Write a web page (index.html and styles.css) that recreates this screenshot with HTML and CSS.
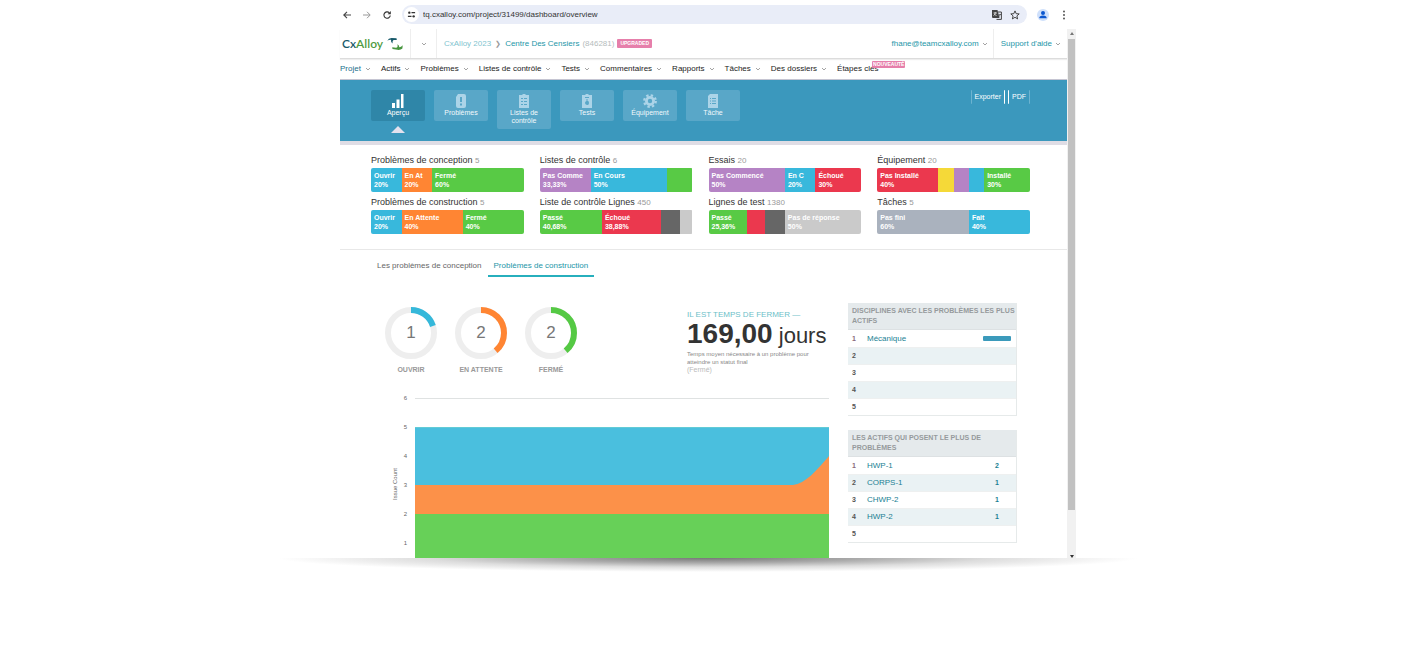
FILE: index.html
```html
<!DOCTYPE html>
<html lang="fr">
<head>
<meta charset="utf-8">
<meta name="viewport" content="width=device-width, initial-scale=1">
<title>CxAlloy – Aperçu</title>
<link rel="stylesheet" href="styles.css">
</head>
<body>
<svg class="sprite" aria-hidden="true">
  <symbol id="chev" viewBox="0 0 6 6"><path d="M1 2l2 2 2-2" fill="none" stroke="currentColor" stroke-width=".9"/></symbol>
</svg>
<div class="window">
  <div class="browser">
    <button class="tool" aria-label="Retour"><svg viewBox="0 0 10 10"><path d="M9 5H2M5 1.800L1.800 5 5 8.200" fill="none" stroke="#444" stroke-width="1.100"/></svg></button>
    <button class="tool" aria-label="Suivant"><svg viewBox="0 0 10 10"><path d="M1 5h7M5 1.800L8.200 5 5 8.200" fill="none" stroke="#999" stroke-width="1"/></svg></button>
    <button class="tool" aria-label="Actualiser"><svg viewBox="0 0 10 10"><path d="M8.300 5.500A3.200 3.200 0 1 1 7.300 2.700" fill="none" stroke="#333" stroke-width="1.100"/><path d="M8.800 1v3.200H5.600z" fill="#333"/></svg></button>
    <div class="address">
      <span class="site"><svg viewBox="0 0 10 10"><path d="M5 3h4M1 7h4" stroke="#333" stroke-width="1.300"/><circle cx="2.600" cy="3" r="1.300" fill="#333"/><circle cx="7.400" cy="7" r="1.300" fill="#333"/></svg></span>
      <input class="url" type="text" aria-label="Adresse" value="tq.cxalloy.com/project/31499/dashboard/overview">
      <button class="tool" aria-label="Traduire"><svg viewBox="0 0 10 10"><path d="M0 0h5.500l2 8H1Q0 8 0 7z" fill="#444"/><path d="M6 2h3.400v7.400H4.500" fill="none" stroke="#444" stroke-width="1"/><path d="M1.500 3h3.500M3.200 2v1Q3 5 1.500 5.500M2.500 4l2 2" stroke="#fff" stroke-width=".7" fill="none"/><path d="M6.500 4.500H9M8.500 4.500L6.500 7" stroke="#444" stroke-width=".7"/></svg></button>
      <button class="tool" aria-label="Favori"><svg viewBox="0 0 10 10"><path d="M5 .9l1.200 2.800 3 .2-2.300 2 .7 3L5 7.300 2.400 8.900l.7-3-2.300-2 3-.2z" fill="none" stroke="#333" stroke-width=".9"/></svg></button>
    </div>
    <button class="tool profile" aria-label="Profil"><svg viewBox="0 0 12 12"><circle cx="6" cy="6" r="6" fill="#cfe0fb"/><circle cx="6" cy="4" r="2" fill="#0b57d0"/><path d="M2.300 9.300Q2.300 6.600 6 6.600t3.700 2.700z" fill="#0b57d0"/></svg></button>
    <button class="tool" aria-label="Menu"><svg viewBox="0 0 10 10"><g fill="#444"><circle cx="5" cy="1.500" r=".9"/><circle cx="5" cy="5" r=".9"/><circle cx="5" cy="8.500" r=".9"/></g></svg></button>
  </div>

  <div class="view">
    <div class="page">
      <header class="top">
        <a class="logo" href="#"><span><span class="cx">Cx</span>Alloy</span>
          <svg viewBox="0 0 16 14"><path d="M.3 3.800Q1.500 1 4.500 1L9.500 1.200L9.800 3H7Q5.200 3.200 5.600 6.500Q3.600 5 4 2.800Q2 2.600 .3 3.800z" fill="#17596a"/><path d="M15.700 8.200L15.400 11.500Q13.500 13.200 10.500 12.800L5.500 12L5.200 10.300L9 10.800Q11.200 10.800 10.400 7.300Q12.400 8.500 12.300 10.300Q14 10.200 15.700 8.200z" fill="#48963f"/></svg></a>
        <button class="switch" aria-label="Changer de projet"><svg class="chev"><use href="#chev"/></svg></button>
        <nav class="crumbs" aria-label="Fil d'Ariane">
          <a class="parent" href="#">CxAlloy 2023</a><span class="sep">❯</span><a href="#">Centre Des Censiers</a>
          <span class="id">(846281)</span><span class="badge">UPGRADED</span>
        </nav>
        <button class="user">fhane@teamcxalloy.com<svg class="chev"><use href="#chev"/></svg></button>
        <button class="help">Support d'aide<svg class="chev"><use href="#chev"/></svg></button>
      </header>

      <nav class="menu" aria-label="Menu principal">
        <button class="current">Projet<svg class="chev"><use href="#chev"/></svg></button>
        <button>Actifs<svg class="chev"><use href="#chev"/></svg></button>
        <button>Problèmes<svg class="chev"><use href="#chev"/></svg></button>
        <button>Listes de contrôle<svg class="chev"><use href="#chev"/></svg></button>
        <button>Tests<svg class="chev"><use href="#chev"/></svg></button>
        <button>Commentaires<svg class="chev"><use href="#chev"/></svg></button>
        <button>Rapports<svg class="chev"><use href="#chev"/></svg></button>
        <button>Tâches<svg class="chev"><use href="#chev"/></svg></button>
        <button>Des dossiers<svg class="chev"><use href="#chev"/></svg></button>
        <a class="milestones" href="#">Étapes clés<span class="badge new">NOUVEAUTÉ</span></a>
      </nav>

      <section class="hero">
        <div class="tiles">
          <a class="tile active" href="#"><svg viewBox="0 0 14 14"><path d="M1 9h3v5H1zM5.500 5.500h3V14h-3zM10 0h2.500v14H10z"/></svg>Aperçu</a>
          <a class="tile" href="#"><svg viewBox="0 0 14 14"><path fill-rule="evenodd" d="M4 0h6q2 0 2 2v10q0 2-2 2H4q-2 0-2-2V3zM6 3v5h2V3zM6 9.500v2h2v-2z"/></svg>Problèmes</a>
          <a class="tile" href="#"><svg viewBox="0 0 14 14"><path fill-rule="evenodd" d="M2 1h3l1-1h2l1 1h3v13H2zM4 4v1h2V4zM7 4v1h3V4zM4 7v1h2V7zM7 7v1h3V7zM4 10v1h2v-1zM7 10v1h3v-1z"/></svg>Listes de contrôle</a>
          <a class="tile" href="#"><svg viewBox="0 0 14 14"><path fill-rule="evenodd" d="M2 1h3l1-1h2l1 1h3v13H2zM5 3v1h4V3zM6.500 5v2Q5 7.500 5 9t2 2 2-2-1.500-2V5z"/></svg>Tests</a>
          <a class="tile" href="#"><svg viewBox="0 0 14 14"><circle cx="7" cy="7" r="3.600" fill="none" stroke="currentColor" stroke-width="2.800"/><circle cx="7" cy="7" r="5.800" fill="none" stroke="currentColor" stroke-width="2.200" stroke-dasharray="2.400 2.155"/></svg>Équipement</a>
          <a class="tile" href="#"><svg viewBox="0 0 14 14"><path fill-rule="evenodd" d="M4 0h8v14H2V2zM4 4v1h1V4zM6 4v1h4V4zM4 6.500v1h1v-1zM6 6.500v1h4v-1zM4 9v1h1V9zM6 9v1h4V9z"/></svg>Tâche</a>
        </div>
        <div class="actions"><button>Exporter</button><button>PDF</button></div>
      </section>

      <section class="stats">
        <article><h2>Problèmes de conception <small>5</small></h2><div class="bar"><span class="blue" style="width:20%">Ouvrir<br>20%</span><span class="orange" style="width:20%">En At<br>20%</span><span class="green" style="width:60%">Fermé<br>60%</span></div></article>
        <article><h2>Listes de contrôle <small>6</small></h2><div class="bar"><span class="purple" style="width:33.33%">Pas Comme<br>33,33%</span><span class="blue" style="width:50%">En Cours<br>50%</span><span class="green" style="width:16.67%"></span></div></article>
        <article><h2>Essais <small>20</small></h2><div class="bar"><span class="purple" style="width:50%">Pas Commencé<br>50%</span><span class="blue" style="width:20%">En C<br>20%</span><span class="red" style="width:30%">Échoué<br>30%</span></div></article>
        <article><h2>Équipement <small>20</small></h2><div class="bar"><span class="red" style="width:40%">Pas Installé<br>40%</span><span class="yellow" style="width:10%"></span><span class="purple" style="width:10%"></span><span class="blue" style="width:10%"></span><span class="green" style="width:30%">Installé<br>30%</span></div></article>
        <article><h2>Problèmes de construction <small>5</small></h2><div class="bar"><span class="blue" style="width:20%">Ouvrir<br>20%</span><span class="orange" style="width:40%">En Attente<br>40%</span><span class="green" style="width:40%">Fermé<br>40%</span></div></article>
        <article><h2>Liste de contrôle Lignes <small>450</small></h2><div class="bar"><span class="green" style="width:40.68%">Passé<br>40,68%</span><span class="red" style="width:38.88%">Échoué<br>38,88%</span><span class="dark" style="width:12.44%"></span><span class="silver" style="width:8%"></span></div></article>
        <article><h2>Lignes de test <small>1380</small></h2><div class="bar"><span class="green" style="width:25.36%">Passé<br>25,36%</span><span class="red" style="width:11.64%"></span><span class="dark" style="width:13%"></span><span class="silver" style="width:50%">Pas de réponse<br>50%</span></div></article>
        <article><h2>Tâches <small>5</small></h2><div class="bar"><span class="slate" style="width:60%">Pas fini<br>60%</span><span class="blue" style="width:40%">Fait<br>40%</span></div></article>
      </section>

      <nav class="tabs" aria-label="Type de problèmes">
        <a href="#">Les problèmes de conception</a><a class="on" href="#">Problèmes de construction</a>
      </nav>

      <main class="main">
        <div class="left">
          <div class="summary">
            <div class="donuts">
              <figure><div class="ring"><svg viewBox="0 0 52 52"><circle class="track" cx="26" cy="26" r="23"/><circle cx="26" cy="26" r="23" pathLength="100" stroke="#35b8da" stroke-dasharray="20 100"/></svg><span>1</span></div><figcaption>OUVRIR</figcaption></figure>
              <figure><div class="ring"><svg viewBox="0 0 52 52"><circle class="track" cx="26" cy="26" r="23"/><circle cx="26" cy="26" r="23" pathLength="100" stroke="#ff8533" stroke-dasharray="39 100"/></svg><span>2</span></div><figcaption>EN ATTENTE</figcaption></figure>
              <figure><div class="ring"><svg viewBox="0 0 52 52"><circle class="track" cx="26" cy="26" r="23"/><circle cx="26" cy="26" r="23" pathLength="100" stroke="#55c944" stroke-dasharray="39 100"/></svg><span>2</span></div><figcaption>FERMÉ</figcaption></figure>
            </div>
            <div class="metric">
              <h3>IL EST TEMPS DE FERMER —</h3>
              <p class="value"><strong>169,00</strong> jours</p>
              <p class="note">Temps moyen nécessaire à un problème pour<br>atteindre un statut final</p>
              <p class="state">(Fermé)</p>
            </div>
          </div>
          <div class="chart">
            <div class="axis-title"><span>Issue Count</span></div>
            <ol class="ticks"><li>6</li><li>5</li><li>4</li><li>3</li><li>2</li><li>1</li></ol>
            <svg class="plot" viewBox="0 0 414 160" preserveAspectRatio="none" role="img" aria-label="Nombre de problèmes">
              <path d="M0 .5h414" stroke="#dfe2e2" stroke-width="1"/>
              <path d="M0 29h414v131H0z" fill="#4abfde"/>
              <path d="M0 29.500h414" stroke="#62cbd6"/>
              <path d="M0 87h378C390 86 402 72 414 58V160H0z" fill="#fc9149"/>
              <path d="M0 116h414v44H0z" fill="#67d058"/>
            </svg>
          </div>
        </div>
        <aside class="side">
          <table>
            <thead><tr><th colspan="3">DISCIPLINES AVEC LES PROBLÈMES LES PLUS ACTIFS</th></tr></thead>
            <tbody>
              <tr><td>1</td><td><a href="#">Mécanique</a></td><td><span class="meter"></span></td></tr>
              <tr><td>2</td><td></td><td></td></tr>
              <tr><td>3</td><td></td><td></td></tr>
              <tr><td>4</td><td></td><td></td></tr>
              <tr><td>5</td><td></td><td></td></tr>
            </tbody>
          </table>
          <table>
            <thead><tr><th colspan="3">LES ACTIFS QUI POSENT LE PLUS DE PROBLÈMES</th></tr></thead>
            <tbody>
              <tr><td>1</td><td><a href="#">HWP-1</a></td><td class="num">2</td></tr>
              <tr><td>2</td><td><a href="#">CORPS-1</a></td><td class="num">1</td></tr>
              <tr><td>3</td><td><a href="#">CHWP-2</a></td><td class="num">1</td></tr>
              <tr><td>4</td><td><a href="#">HWP-2</a></td><td class="num">1</td></tr>
              <tr><td>5</td><td></td><td></td></tr>
            </tbody>
          </table>
        </aside>
      </main>
    </div>
    <div class="scroll" aria-hidden="true"><i class="up"></i><i class="thumb"></i><i class="down"></i></div>
  </div>
</div>
<div class="shadow"></div>
</body>
</html>
```

FILE: styles.css
```css
* { box-sizing: border-box; }
body { margin: 0; background: #fff; color: #333; font: 8px/10px "Liberation Sans", Arial, sans-serif; }
h2, h3, p, figure, ol { margin: 0; padding: 0; font-weight: normal; list-style: none; }
a { color: inherit; text-decoration: none; }
button { border: 0; padding: 0; background: none; color: inherit; font: inherit; cursor: pointer; }
svg { display: block; }
.sprite { position: absolute; width: 0; height: 0; }
.chev { width: 6px; height: 6px; color: #999; }

.window { max-width: 736px; margin: 0 auto; }

/* Browser toolbar */
.browser { display: flex; align-items: center; gap: 10px; height: 29px; padding: 0 7px 0 2px; }
.tool svg { width: 10px; height: 10px; }
.profile svg { width: 12px; height: 12px; }
.address { flex: 1; display: flex; align-items: center; gap: 8px; height: 19px; padding-right: 7px; border-radius: 10px; background: #e9edf8; }
.site { display: grid; place-items: center; width: 15px; height: 15px; margin-left: 2px; border-radius: 50%; background: #fff; }
.site svg { width: 9px; height: 9px; }
.url { flex: 1; min-width: 0; margin-left: -4px; border: 0; padding: 0; background: none; color: #333; font: inherit; }

.view { display: flex; }
.page { flex: 1; min-width: 0; }

/* Header */
.top { display: flex; align-items: center; height: 30px; color: #2496a8; border-bottom: 1px solid #dcdcdc; box-shadow: 0 1px 1px #eee; }
.logo { display: flex; align-items: center; gap: 4px; width: 70px; padding-left: 2px; color: #4f9b3f; font: 600 12px/16px Lato, sans-serif; }
.logo svg { width: 16px; height: 14px; }
.cx { color: #17596a; }
.switch { align-self: stretch; display: grid; place-items: center; width: 27px; border: solid #eee; border-width: 0 1px; }
.crumbs { flex: 1; display: flex; align-items: center; gap: 3px; padding-left: 7px; }
.parent { color: #7fc4cf; }
.sep { padding: 0 1px; color: #999; font-size: 7px; }
.id { color: #b5bcbc; }
.badge { padding: 0 3px; border-radius: 1px; background: #e67fab; color: #fff; font-size: 5px; font-weight: bold; line-height: 9px; }
.user, .help { display: flex; align-items: center; gap: 3px; align-self: stretch; }
.user { padding-right: 5px; }
.help { padding: 0 6px 0 7px; border-left: 1px solid #eee; }

.menu { display: flex; align-items: center; gap: 10px; height: 21px; color: #222; border-bottom: 1px solid #c5c5d2; }
.menu button { display: flex; align-items: center; gap: 4px; }
.menu .current { color: #1b6f8c; }
.milestones { position: relative; }
.new { position: absolute; left: 35px; top: -3px; padding: 0 1px; line-height: 7px; }

/* Blue overview band */
.hero { display: flex; justify-content: space-between; align-items: flex-start; min-height: 65px; padding: 10px 37px 8px 31px; background: #3b98bd; border-bottom: 4px solid #dfdde5; color: #fff; }
.tiles { display: flex; align-items: flex-start; gap: 9px; }
.tile { position: relative; width: 54px; padding: 4px 6px; border-radius: 2px; background: #59a7c8; color: #f2f9fc; font-size: 7px; line-height: 8px; text-align: center; }
.tile svg { width: 14px; height: 14px; margin: 0 auto 1px; fill: currentColor; color: #acd4e8; }
.tile.active { background: #2f86a8; color: #fff; }
.tile.active svg { color: #fff; }
.tile.active::after { content: ""; position: absolute; left: 20px; top: 36px; border: 7px solid transparent; border-top: 0; border-bottom-color: #e4e1ee; }
.actions { display: flex; gap: 3px; }
.actions button { height: 14px; padding: 0 3px; border: solid #fff; border-width: 0 1px; border-radius: 1px; font-size: 7px; }
.actions button:first-child { border-left-color: #6db3d0; }
.actions button:last-child { border-right-color: #6db3d0; }

/* Status bars */
.stats { display: grid; grid-template-columns: repeat(4, minmax(0, 1fr)); gap: 5px 16px; padding: 10px 37px 15px 31px; border-bottom: 1px solid #e8e8e8; }
.stats h2 { margin-bottom: 2px; font-size: 9px; line-height: 10px; white-space: nowrap; }
.stats small { color: #999; font-size: 8px; }
.bar { display: flex; height: 24px; overflow: hidden; border-radius: 2px; color: #fff; font-size: 7px; font-weight: bold; line-height: 9px; }
.bar span { flex: none; padding: 3px 0 0 3px; overflow: hidden; white-space: nowrap; }
.blue { background: #38b8dc; }
.orange { background: #ff8533; }
.green { background: #58ca45; }
.purple { background: #b583c5; }
.red { background: #eb384e; }
.yellow { background: #f5d938; }
.dark { background: #666; }
.silver { background: #cacaca; }
.slate { background: #aab2be; }

.tabs { display: flex; padding: 8px 31px 0; color: #666; }
.tabs a { padding: 3px 6px 4px; border-bottom: 2px solid transparent; line-height: 10px; }
.tabs .on { color: #2496a8; border-color: #27afbd; }

/* Main area */
.main { display: grid; grid-template-columns: minmax(0, 1fr) 169px; gap: 19px; padding: 26px 50px 0 45px; }
.summary { display: flex; justify-content: space-between; padding-top: 4px; }
.donuts { display: flex; gap: 18px; }
.ring { position: relative; width: 52px; height: 52px; }
.ring circle { fill: none; stroke-width: 6; }
.ring svg { transform: rotate(-90deg); }
.ring .track { stroke: #eee; }
.ring span { position: absolute; inset: 0; display: grid; place-items: center; color: #777; font-size: 17px; }
.donuts figcaption { margin-top: 6px; color: #999; font-size: 7px; font-weight: bold; line-height: 10px; text-align: center; white-space: nowrap; }
.metric { width: 142px; padding-top: 3px; white-space: nowrap; }
.metric h3 { color: #6cc0c8; font-size: 8px; line-height: 10px; }
.value { color: #333; font-size: 22px; line-height: 28px; }
.value strong { font-size: 28px; }
.note { color: #888; font-size: 6px; line-height: 8px; }
.state { color: #bbb; font-size: 7px; line-height: 8px; }

.chart { display: flex; padding: 9px 0 0 5px; color: #666; font-size: 6px; }
.axis-title { display: grid; place-items: center; width: 10px; padding-top: 26px; }
.axis-title span { writing-mode: vertical-rl; transform: rotate(180deg); line-height: 8px; }
.ticks { width: 15px; padding-right: 8px; text-align: right; }
.ticks li { line-height: 29px; }
.plot { flex: 1; min-width: 0; height: 160px; margin-top: 14px; }

.side { display: flex; flex-direction: column; gap: 14px; }
table { width: 100%; border-collapse: separate; border-spacing: 0; border: solid #e6eaea; border-width: 0 1px 1px 0; font-size: 7px; }
th { padding: 3px 0 3px 4px; border-bottom: 1px solid #dde1e3; background: #e5eaec; color: #969a9c; text-align: left; line-height: 10px; }
td { height: 17px; padding: 0 4px; border-top: 1px solid #eef0f0; color: #1a7f93; line-height: 10px; }
tbody tr:first-child td { border-top: 0; }
tbody tr:nth-child(even) { background: #eaf2f4; }
td:first-child { width: 15px; color: #555; font-weight: bold; }
tbody tr:first-child td:first-child { color: #8a6a7a; }
td:nth-child(2) { font-size: 8px; }
td:last-child { width: 37px; }
.num { padding-left: 16px; font-weight: bold; }
.meter { display: block; width: 28px; height: 5px; border-radius: 1px; background: #3b9abb; }

/* Scroll bar */
.scroll { display: flex; flex-direction: column; align-items: center; width: 9px; background: #f1f1f1; }
.up, .down { border: 2px solid transparent; }
.up { margin: 1px 0 4px; border-bottom: 3px solid #777; }
.down { margin-top: auto; border-top: 3px solid #333; border-bottom: 0; }
.thumb { width: 7px; height: 89%; background: #c1c1c1; }

.shadow { max-width: 860px; height: 14px; margin: 0 auto; background: radial-gradient(50% 100% at 50% 0, #777 0%, #aaa 35%, #ddd 65%, #fff 100%); }
```
